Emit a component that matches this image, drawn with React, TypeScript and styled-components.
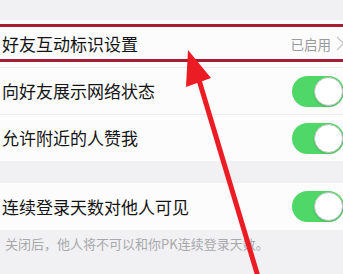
import React from 'react';
import styled, { createGlobalStyle } from 'styled-components';

const GlobalStyle = createGlobalStyle`
  html, body {
    margin: 0;
    padding: 0;
    background: #f1f1f3;
  }
  * {
    box-sizing: border-box;
  }
`;

const rows = [
  { label: '向好友展示网络状态', on: true },
  { label: '允许附近的人赞我', on: true },
];

export default function App() {
  return (
    <>
      <GlobalStyle />
      <Page>
        <TopSpace />
        <Group>
          <Row>
            <Label>好友互动标识设置</Label>
            <Status>
              已启用
              <Chevron width="9" height="15" viewBox="0 0 9 15">
                <path d="M1 1l6.5 6.5L1 14" fill="none" stroke="#c8c8cc" strokeWidth="1.4" />
              </Chevron>
            </Status>
          </Row>
          {rows.map(row => (
            <Row key={row.label} $divider>
              <Label>{row.label}</Label>
              <Toggle $on={row.on}>
                <Knob />
              </Toggle>
            </Row>
          ))}
        </Group>
        <Gap />
        <Group>
          <Row $height={47}>
            <Label>连续登录天数对他人可见</Label>
            <Toggle $on>
              <Knob />
            </Toggle>
          </Row>
        </Group>
        <Footnote>关闭后，他人将不可以和你PK连续登录天数。</Footnote>

        <HighlightBox />
        <Arrow width="343" height="274" viewBox="0 0 343 274">
          <line x1="199" y1="80" x2="259" y2="280" stroke="#ec1c24" strokeWidth="5" />
          <polygon points="188,50 186,87 211,78" fill="#ec1c24" />
        </Arrow>
      </Page>
    </>
  );
}

const Page = styled.div`
  position: relative;
  width: 343px;
  height: 274px;
  overflow: hidden;
  background: #f1f1f3;
  font-family: 'Noto Sans CJK SC', 'Noto Sans', sans-serif;
`;

const TopSpace = styled.div`
  height: 20px;
`;

const Group = styled.div`
  display: flex;
  flex-direction: column;
  background: #fcfcfc;
`;

const Row = styled.div<{ $divider?: boolean; $height?: number }>`
  display: flex;
  align-items: center;
  justify-content: space-between;
  height: ${p => p.$height ?? 47}px;
  padding-left: 2px;
  border-top: ${p => (p.$divider ? '1px solid #ececee' : 'none')};
`;

const Label = styled.span`
  font-size: 17px;
  line-height: 24px;
  color: #141414;
`;

const Status = styled.span`
  display: flex;
  align-items: center;
  gap: 5px;
  margin-right: -2px;
  font-size: 13.5px;
  line-height: 20px;
  color: #9a9a9e;
`;

const Chevron = styled.svg`
  display: block;
`;

const Toggle = styled.div<{ $on?: boolean }>`
  position: relative;
  flex: none;
  width: 52px;
  height: 31px;
  margin-right: -1px;
  border-radius: 16px;
  background: ${p => (p.$on ? '#4fd867' : '#e5e5ea')};
`;

const Knob = styled.div`
  position: absolute;
  top: 1px;
  right: 1px;
  width: 29px;
  height: 29px;
  border-radius: 50%;
  background: #ffffff;
  border: 1px solid #b9c2bb;
  box-shadow: 0 1px 2px rgba(0, 0, 0, 0.15);
`;

const Gap = styled.div`
  height: 22px;
`;

const Footnote = styled.div`
  padding: 5px 0 0 5px;
  font-size: 13px;
  line-height: 18px;
  color: #a8a8ac;
`;

const HighlightBox = styled.div`
  position: absolute;
  top: 24px;
  left: -3px;
  width: 350px;
  height: 38px;
  border: 3px solid #a81d33;
  pointer-events: none;
`;

const Arrow = styled.svg`
  position: absolute;
  top: 0;
  left: 0;
  pointer-events: none;
`;
